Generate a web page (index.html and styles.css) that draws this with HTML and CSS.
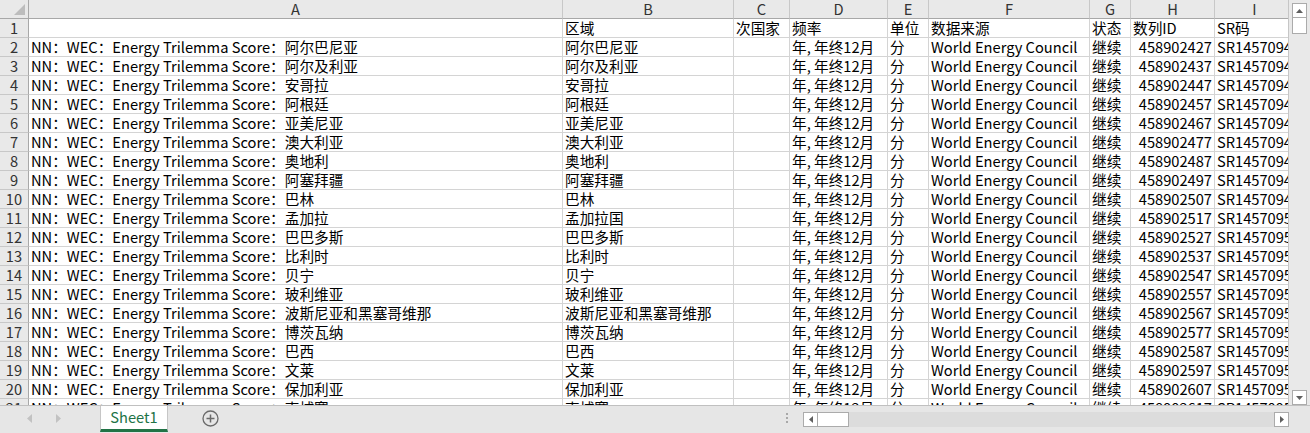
FILE: index.html
```html
<!DOCTYPE html>
<html lang="zh-CN">
<head>
<meta charset="utf-8">
<title>Sheet1</title>
<link rel="stylesheet" href="styles.css">
</head>
<body>
<div class="app">
  <div class="main">
    <div class="sheet">
      <div class="grid">
        <div class="c h corner"><div class="tri"></div></div>
        <div class="c h">A</div><div class="c h">B</div><div class="c h">C</div><div class="c h">D</div><div class="c h">E</div><div class="c h">F</div><div class="c h">G</div><div class="c h">H</div><div class="c h">I</div>

        <div class="c r">1</div><div class="c"></div><div class="c">区域</div><div class="c">次国家</div><div class="c">频率</div><div class="c">单位</div><div class="c">数据来源</div><div class="c">状态</div><div class="c">数列ID</div><div class="c">SR码</div>

        <div class="c r">2</div><div class="c">NN：WEC：Energy Trilemma Score：阿尔巴尼亚</div><div class="c">阿尔巴尼亚</div><div class="c"></div><div class="c">年, 年终12月</div><div class="c">分</div><div class="c">World Energy Council</div><div class="c">继续</div><div class="c n">458902427</div><div class="c">SR1457094</div>
        <div class="c r">3</div><div class="c">NN：WEC：Energy Trilemma Score：阿尔及利亚</div><div class="c">阿尔及利亚</div><div class="c"></div><div class="c">年, 年终12月</div><div class="c">分</div><div class="c">World Energy Council</div><div class="c">继续</div><div class="c n">458902437</div><div class="c">SR1457094</div>
        <div class="c r">4</div><div class="c">NN：WEC：Energy Trilemma Score：安哥拉</div><div class="c">安哥拉</div><div class="c"></div><div class="c">年, 年终12月</div><div class="c">分</div><div class="c">World Energy Council</div><div class="c">继续</div><div class="c n">458902447</div><div class="c">SR1457094</div>
        <div class="c r">5</div><div class="c">NN：WEC：Energy Trilemma Score：阿根廷</div><div class="c">阿根廷</div><div class="c"></div><div class="c">年, 年终12月</div><div class="c">分</div><div class="c">World Energy Council</div><div class="c">继续</div><div class="c n">458902457</div><div class="c">SR1457094</div>
        <div class="c r">6</div><div class="c">NN：WEC：Energy Trilemma Score：亚美尼亚</div><div class="c">亚美尼亚</div><div class="c"></div><div class="c">年, 年终12月</div><div class="c">分</div><div class="c">World Energy Council</div><div class="c">继续</div><div class="c n">458902467</div><div class="c">SR1457094</div>
        <div class="c r">7</div><div class="c">NN：WEC：Energy Trilemma Score：澳大利亚</div><div class="c">澳大利亚</div><div class="c"></div><div class="c">年, 年终12月</div><div class="c">分</div><div class="c">World Energy Council</div><div class="c">继续</div><div class="c n">458902477</div><div class="c">SR1457094</div>
        <div class="c r">8</div><div class="c">NN：WEC：Energy Trilemma Score：奥地利</div><div class="c">奥地利</div><div class="c"></div><div class="c">年, 年终12月</div><div class="c">分</div><div class="c">World Energy Council</div><div class="c">继续</div><div class="c n">458902487</div><div class="c">SR1457094</div>
        <div class="c r">9</div><div class="c">NN：WEC：Energy Trilemma Score：阿塞拜疆</div><div class="c">阿塞拜疆</div><div class="c"></div><div class="c">年, 年终12月</div><div class="c">分</div><div class="c">World Energy Council</div><div class="c">继续</div><div class="c n">458902497</div><div class="c">SR1457094</div>
        <div class="c r">10</div><div class="c">NN：WEC：Energy Trilemma Score：巴林</div><div class="c">巴林</div><div class="c"></div><div class="c">年, 年终12月</div><div class="c">分</div><div class="c">World Energy Council</div><div class="c">继续</div><div class="c n">458902507</div><div class="c">SR1457094</div>
        <div class="c r">11</div><div class="c">NN：WEC：Energy Trilemma Score：孟加拉</div><div class="c">孟加拉国</div><div class="c"></div><div class="c">年, 年终12月</div><div class="c">分</div><div class="c">World Energy Council</div><div class="c">继续</div><div class="c n">458902517</div><div class="c">SR1457095</div>
        <div class="c r">12</div><div class="c">NN：WEC：Energy Trilemma Score：巴巴多斯</div><div class="c">巴巴多斯</div><div class="c"></div><div class="c">年, 年终12月</div><div class="c">分</div><div class="c">World Energy Council</div><div class="c">继续</div><div class="c n">458902527</div><div class="c">SR1457095</div>
        <div class="c r">13</div><div class="c">NN：WEC：Energy Trilemma Score：比利时</div><div class="c">比利时</div><div class="c"></div><div class="c">年, 年终12月</div><div class="c">分</div><div class="c">World Energy Council</div><div class="c">继续</div><div class="c n">458902537</div><div class="c">SR1457095</div>
        <div class="c r">14</div><div class="c">NN：WEC：Energy Trilemma Score：贝宁</div><div class="c">贝宁</div><div class="c"></div><div class="c">年, 年终12月</div><div class="c">分</div><div class="c">World Energy Council</div><div class="c">继续</div><div class="c n">458902547</div><div class="c">SR1457095</div>
        <div class="c r">15</div><div class="c">NN：WEC：Energy Trilemma Score：玻利维亚</div><div class="c">玻利维亚</div><div class="c"></div><div class="c">年, 年终12月</div><div class="c">分</div><div class="c">World Energy Council</div><div class="c">继续</div><div class="c n">458902557</div><div class="c">SR1457095</div>
        <div class="c r">16</div><div class="c">NN：WEC：Energy Trilemma Score：波斯尼亚和黑塞哥维那</div><div class="c">波斯尼亚和黑塞哥维那</div><div class="c"></div><div class="c">年, 年终12月</div><div class="c">分</div><div class="c">World Energy Council</div><div class="c">继续</div><div class="c n">458902567</div><div class="c">SR1457095</div>
        <div class="c r">17</div><div class="c">NN：WEC：Energy Trilemma Score：博茨瓦纳</div><div class="c">博茨瓦纳</div><div class="c"></div><div class="c">年, 年终12月</div><div class="c">分</div><div class="c">World Energy Council</div><div class="c">继续</div><div class="c n">458902577</div><div class="c">SR1457095</div>
        <div class="c r">18</div><div class="c">NN：WEC：Energy Trilemma Score：巴西</div><div class="c">巴西</div><div class="c"></div><div class="c">年, 年终12月</div><div class="c">分</div><div class="c">World Energy Council</div><div class="c">继续</div><div class="c n">458902587</div><div class="c">SR1457095</div>
        <div class="c r">19</div><div class="c">NN：WEC：Energy Trilemma Score：文莱</div><div class="c">文莱</div><div class="c"></div><div class="c">年, 年终12月</div><div class="c">分</div><div class="c">World Energy Council</div><div class="c">继续</div><div class="c n">458902597</div><div class="c">SR1457095</div>
        <div class="c r">20</div><div class="c">NN：WEC：Energy Trilemma Score：保加利亚</div><div class="c">保加利亚</div><div class="c"></div><div class="c">年, 年终12月</div><div class="c">分</div><div class="c">World Energy Council</div><div class="c">继续</div><div class="c n">458902607</div><div class="c">SR1457095</div>
        <div class="c r">21</div><div class="c">NN：WEC：Energy Trilemma Score：柬埔寨</div><div class="c">柬埔寨</div><div class="c"></div><div class="c">年, 年终12月</div><div class="c">分</div><div class="c">World Energy Council</div><div class="c">继续</div><div class="c n">458902617</div><div class="c">SR1457095</div>
      </div>
    </div>
    <div class="vscroll">
      <div class="sbtn"><svg width="7" height="4" viewBox="0 0 7 4"><path d="M0 4 L3.5 0 L7 4 Z" fill="#5f5f5f"/></svg></div>
      <div class="vthumb"></div>
      <div class="sbtn down"><svg width="7" height="4" viewBox="0 0 7 4"><path d="M0 0 L3.5 4 L7 0 Z" fill="#5f5f5f"/></svg></div>
    </div>
  </div>
  <div class="bottom">
    <div class="tabs-area">
      <div class="nav">
        <svg width="5" height="9" viewBox="0 0 5 9"><path d="M5 0 L0 4.5 L5 9 Z" fill="#c2c2c2"/></svg>
        <svg width="5" height="9" viewBox="0 0 5 9"><path d="M0 0 L5 4.5 L0 9 Z" fill="#c2c2c2"/></svg>
      </div>
      <div class="tab">Sheet1</div>
      <svg class="add" width="17" height="17" viewBox="0 0 17 17"><circle cx="8.5" cy="8.5" r="7.5" fill="none" stroke="#6a6a6a" stroke-width="1.3"/><path d="M8.5 4.5 V12.5 M4.5 8.5 H12.5" stroke="#6a6a6a" stroke-width="1.5"/></svg>
    </div>
    <div class="dots"><span></span><span></span><span></span></div>
    <div class="hscroll">
      <div class="hbtn"><svg width="4" height="7" viewBox="0 0 4 7"><path d="M4 0 L0 3.5 L4 7 Z" fill="#5f5f5f"/></svg></div>
      <div class="hthumb"></div>
      <div class="htrack"></div>
      <div class="hbtn"><svg width="4" height="7" viewBox="0 0 4 7"><path d="M0 0 L4 3.5 L0 7 Z" fill="#5f5f5f"/></svg></div>
    </div>
  </div>
</div>
</body>
</html>
```

FILE: styles.css
```css
* { box-sizing: border-box; }

body {
  margin: 0;
  background: #fff;
  font-family: "Noto Sans CJK SC", sans-serif;
  font-size: 14.67px;
  color: #000;
}

.app {
  width: 1310px;
  height: 433px;
  display: flex;
  flex-direction: column;
  overflow: hidden;
}

.main {
  display: flex;
  height: 405px;
  flex: none;
}

.sheet {
  width: 1289px;
  height: 405px;
  overflow: hidden;
  border-right: 1px solid #c6c6c6;
  flex: none;
}

.grid {
  display: grid;
  grid-template-columns: 29px 534px 171px 56px 98px 41px 161px 41px 84px 80px;
  grid-auto-rows: 19px;
  width: 1295px;
}

.c {
  border-right: 1px solid #d4d4d4;
  border-bottom: 1px solid #d4d4d4;
  line-height: 18px;
  padding: 0 2px;
  white-space: nowrap;
}

.n { text-align: right; }

.h {
  background: #e9e9e9;
  color: #333;
  text-align: center;
  border-right-color: #c8c8c8;
  border-bottom-color: #a8a8a8;
}

.r {
  background: #e9e9e9;
  color: #333;
  text-align: center;
  border-right-color: #a8a8a8;
  border-bottom-color: #c8c8c8;
  padding: 0;
}

.corner {
  display: flex;
  justify-content: flex-end;
  align-items: flex-end;
  padding: 0 3px 3px 0;
  border-right-color: #a8a8a8;
}

.tri {
  width: 11px;
  height: 11px;
  background: #bdbdbd;
  clip-path: polygon(100% 0, 100% 100%, 0 100%);
}

.vscroll {
  width: 21px;
  height: 405px;
  background: #e9e9e9;
  display: flex;
  flex-direction: column;
  padding: 3px 3px 0 3px;
}

.sbtn {
  width: 15px;
  height: 15px;
  background: #fff;
  border: 1px solid #ababab;
  display: flex;
  align-items: center;
  justify-content: center;
  flex: none;
}

.vthumb {
  width: 15px;
  height: 17px;
  margin-top: -1px;
  background: #fff;
  border: 1px solid #ababab;
  flex: none;
}

.sbtn.down { margin-top: auto; margin-bottom: 0; }

.bottom {
  height: 28px;
  background: #e6e6e6;
  border-top: 1px solid #c0c0c0;
  display: flex;
  align-items: flex-start;
  flex: none;
  position: relative;
}

.tabs-area {
  width: 786px;
  display: flex;
  align-items: flex-start;
  flex: none;
}

.nav {
  width: 100px;
  display: flex;
  gap: 24px;
  padding: 8px 0 0 27px;
}

.tab {
  width: 68px;
  height: 26px;
  background: #fff;
  border-left: 1px solid #c6c6c6;
  border-right: 1px solid #c6c6c6;
  border-bottom: 3px solid #217346;
  color: #217346;
  text-align: center;
  line-height: 18px;
  padding-top: 2px;
}

.add {
  margin: 4px 0 0 34px;
}

.dots {
  width: 17px;
  display: flex;
  flex-direction: column;
  gap: 2px;
  padding: 7px 0 0 0;
}

.dots span {
  width: 2px;
  height: 2px;
  background: #a8a8a8;
}

.hscroll {
  width: 486px;
  height: 15px;
  margin-top: 6px;
  background: #dcdcdc;
  display: flex;
}

.hbtn {
  width: 15px;
  height: 15px;
  background: #fff;
  border: 1px solid #ababab;
  display: flex;
  align-items: center;
  justify-content: center;
  flex: none;
}

.hthumb {
  width: 32px;
  height: 15px;
  margin-left: -1px;
  background: #fff;
  border: 1px solid #ababab;
  flex: none;
}

.htrack { flex: 1; }
```
